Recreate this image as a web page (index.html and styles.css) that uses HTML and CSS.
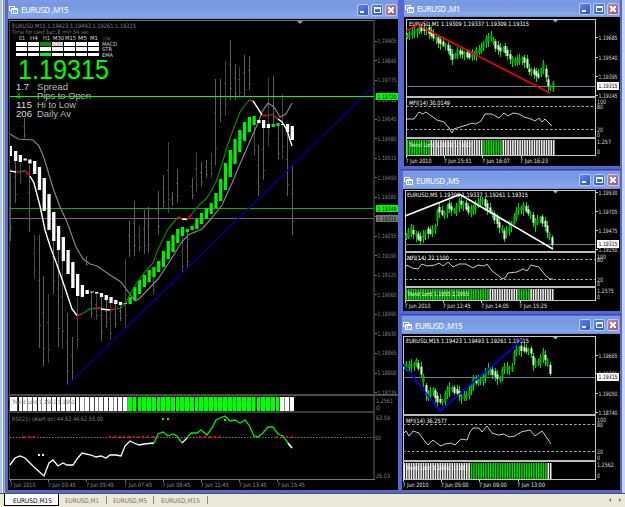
FILE: index.html
```html
<!DOCTYPE html>
<html lang="en">

<head>
    <title>EURUSD charts</title>
    <meta charset="UTF-8">
    <link rel="stylesheet" href="styles.css">
</head>

<body>
    <svg class="defs">
        <symbol id="chart-icon" viewBox="0 0 9 9">
            <path d="M0.5 1.5h5v4h-5z" fill="#5f8fe0" stroke="#fff"/>
            <path d="M2.5 3.5h6v5h-6z" fill="#7aa5ee" stroke="#fff"/>
            <path d="M3 4.5h5M4.5 7.5v-2M6.5 7.5v-1" stroke="#fff"/>
        </symbol>
    </svg>

    <div class="workspace">
        <div class="window main">
            <div class="titlebar">
                <svg class="icon"><use href="#chart-icon"/></svg>
                <span class="title">EURUSD ,M15</span>
                <span class="btn min"></span><span class="btn max"></span><span class="btn close"></span>
            </div>
            <svg class="chart" id="main" viewBox="8 19 390 471"></svg>
        </div>

        <div class="side">
            <div class="window m1">
                <div class="titlebar">
                    <svg class="icon"><use href="#chart-icon"/></svg>
                    <span class="title">EURUSD ,M1</span>
                    <span class="btn min"></span><span class="btn max"></span><span class="btn close"></span>
                </div>
                <svg class="chart" id="m1" viewBox="404 17 216 149"></svg>
            </div>
            <div class="window m5">
                <div class="titlebar">
                    <svg class="icon"><use href="#chart-icon"/></svg>
                    <span class="title">EURUSD ,M5</span>
                    <span class="btn min"></span><span class="btn max"></span><span class="btn close"></span>
                </div>
                <svg class="chart" id="m5" viewBox="403 189 217 122"></svg>
            </div>
            <div class="window m15">
                <div class="titlebar">
                    <svg class="icon"><use href="#chart-icon"/></svg>
                    <span class="title">EURUSD ,M15</span>
                    <span class="btn min"></span><span class="btn max"></span><span class="btn close"></span>
                </div>
                <svg class="chart" id="m15" viewBox="402 334 218 156"></svg>
            </div>
        </div>
    </div>

    <div class="tabs">
        <svg class="tab active" width="55" height="12"><text x="8" y="8.5" textLength="39" lengthAdjust="spacingAndGlyphs">EURUSD,M15</text></svg>
        <svg class="tab" width="48" height="12"><text x="6" y="8.5" textLength="34" lengthAdjust="spacingAndGlyphs">EURUSD,M1</text></svg>
        <svg class="tab" width="47" height="12"><text x="6" y="8.5" textLength="34" lengthAdjust="spacingAndGlyphs">EURUSD,M5</text></svg>
        <svg class="tab" width="54" height="12"><text x="7" y="8.5" textLength="39" lengthAdjust="spacingAndGlyphs">EURUSD,M15</text></svg>
        <svg class="scroll" width="18" height="12"><path d="M4 4v4l-2-2zM12 4v4l2-2z"/></svg>
    </div>

    <script src="charts.js"></script>
</body>

</html>
```
FILE: styles.css
```css
body {
    margin: 0;
    width: 625px;
    height: 507px;
    overflow: hidden;
    display: flex;
    flex-direction: column;
    background: #ece9d8;
    font-family: "Liberation Sans", sans-serif;
}

.defs {
    display: none;
}

.workspace {
    display: flex;
    height: 493px;
    box-sizing: border-box;
    border-left: 2px solid #a9c3f0;
    background: linear-gradient(90deg, #fff 0 1px, #6f87d8 1px 2px, #b5b2a6 2px 3px, #4d5fcb 3px 100%);
    padding-left: 3px;
}

.window {
    box-sizing: border-box;
    display: flex;
    flex-direction: column;
    background: #5468cf;
}

.main {
    width: 395px;
    height: 493px;
    padding: 0 2px 3px 3px;
}

.side {
    width: 225px;
    box-sizing: border-box;
    border-right: 3px solid #c8d4f0;
}

.m1 {
    height: 169px;
    padding: 0 2px 3px 4px;
}

.m5 {
    height: 145px;
    padding: 1px 2px 3px 3px;
    border-top: 1px solid #3746a8;
}

.m15 {
    height: 179px;
    padding: 1px 2px 3px 2px;
    border-top: 1px solid #3746a8;
}

.titlebar {
    display: flex;
    align-items: center;
    height: 19px;
    flex: none;
    gap: 2px;
    padding-right: 1px;
    background: linear-gradient(#7a9be6, #7897df 25%, #7d9fe6 60%, #86a8ec 85%, #7590d6);
}

.m1 .titlebar {
    height: 17px;
}

.m5 .titlebar,
.m15 .titlebar {
    height: 18px;
}

.icon {
    width: 9px;
    height: 9px;
    margin-right: 1px;
    margin-left: 1px;
}

.title {
    flex: 1;
    font: 600 8px "Open Sans", sans-serif;
    letter-spacing: -0.5px;
    color: #e6eefe;
}

.btn {
    box-sizing: border-box;
    position: relative;
    width: 12px;
    height: 12px;
    border: 1px solid #b9cbf5;
    border-radius: 2px;
    background: linear-gradient(135deg, #5d87ec, #2c55cf);
}

.btn::after {
    content: "";
    position: absolute;
    box-sizing: border-box;
}

.min::after {
    left: 2px;
    bottom: 2px;
    width: 4px;
    height: 2px;
    background: #fff;
}

.max::after {
    left: 2px;
    top: 2px;
    width: 7px;
    height: 6px;
    border: 1px solid #fff;
    border-top-width: 2px;
}

.close {
    background: linear-gradient(135deg, #c48a9d, #a2566f);
}

.close::after {
    inset: 2px;
    background:
        linear-gradient(45deg, transparent 40%, #fff 40% 60%, transparent 60%),
        linear-gradient(-45deg, transparent 40%, #fff 40% 60%, transparent 60%);
}

.chart {
    display: block;
    flex: 1;
    min-height: 0;
    width: 100%;
    background: #000;
}

.small {
    font-family: "DejaVu Sans Condensed", "DejaVu Sans", sans-serif;
}

.tabs {
    display: flex;
    height: 14px;
    box-sizing: border-box;
    border-top: 1px solid #55534c;
    padding-left: 4px;
    background: #ece9d8;
}

.tab {
    box-sizing: border-box;
    font: 6.5px "DejaVu Sans Condensed", "DejaVu Sans", sans-serif;
    fill: #77746a;
    background: linear-gradient(#8f8c7d, #8f8c7d) right 2px / 1px 8px no-repeat;
}

.tab.active {
    background: #fff;
    border: 1px solid #000;
    border-top: 0;
    fill: #000;
}

.scroll {
    margin-left: auto;
    fill: #77746a;
}
```
FILE: charts.js
```javascript
var NS = "http://www.w3.org/2000/svg";
var root;

function el(name, attrs) {
    var e = document.createElementNS(NS, name);
    for (var k in attrs) e.setAttribute(k, attrs[k]);
    root.appendChild(e);
    return e;
}

function rect(x, y, w, h, fill) {
    el("rect", { x: x, y: y, width: w, height: h, fill: fill, "shape-rendering": "crispEdges" });
}

function line(points, color, width, dash) {
    var a = { points: points, fill: "none", stroke: color, "stroke-width": width || 1 };
    if (dash) a["stroke-dasharray"] = dash;
    el("polyline", a);
}

function text(x, y, w, str, color, size) {
    var a = { x: x, y: y, fill: color, "font-size": size || 6, textLength: w, lengthAdjust: "spacingAndGlyphs" };
    if (!size || size < 8) a["class"] = "small";
    el("text", a).textContent = str;
}

function drawMain() {
    var i, grey = "#666";
    root = document.getElementById("main");

    // frame and separators
    rect(9, 20, 1, 460, "#444");
    rect(9, 20, 365, 1, "#777");
    rect(373, 20, 2, 460, "#333");
    rect(9, 394, 389, 2, "#4a4a4a");
    rect(9, 411, 366, 2, "#3c3c3c");
    rect(9, 479, 366, 1, "#777");
    el("path", { d: "M297 21h6l-3 3z", fill: "#999" });

    // high/low sticks
    var sticks = [[10, 173, 241], [15, 160, 203], [20, 162, 184], [24, 118, 138], [29, 165, 232], [34, 235, 279], [39, 235, 348],
        [43, 276, 366], [48, 294, 363], [53, 230, 294], [58, 250, 347], [62, 260, 349], [67, 313, 385], [72, 337, 381],
        [77, 297, 349], [86, 256, 266], [91, 292, 318], [96, 293, 320], [101, 297, 341], [106, 300, 328], [110, 303, 340],
        [115, 304, 328], [120, 305, 321], [125, 259, 329], [129, 221, 257], [134, 201, 256], [139, 226, 252], [144, 210, 254],
        [148, 207, 253], [153, 272, 295], [158, 191, 235], [163, 175, 207], [168, 142, 213], [172, 192, 206], [177, 169, 203],
        [182, 236, 273], [187, 232, 268], [192, 178, 199], [196, 152, 192], [201, 162, 187], [206, 160, 178], [211, 153, 178],
        [215, 79, 165], [220, 79, 122], [225, 61, 116], [230, 40, 100], [235, 64, 100], [239, 67, 98], [244, 55, 97],
        [249, 56, 90], [254, 124, 156], [258, 145, 196], [263, 128, 180], [268, 78, 146], [273, 76, 126], [278, 124, 160],
        [282, 94, 159], [287, 134, 196], [292, 165, 235]];
    sticks.forEach(function (s, n) {
        rect(s[0], s[1], 1, s[2] - s[1], n % 3 == 2 ? "#444" : "#5c5c5c");
        rect(s[0] - 1, s[1] + (s[2] - s[1]) * 0.4, 1, 1, "#444");
        rect(s[0] + 1, s[1] + (s[2] - s[1]) * 0.8, 1, 1, "#444");
    });

    // levels
    rect(10, 218, 364, 1, grey);
    rect(10, 208, 364, 1, "#00b400");

    // envelope
    line("10,134 18,139 33,140 39,146 44,158 53,188 60,207 67,222 76,247 83,259 90,264 97,266 110,275 121,282 129,293 135,301 139,299 158,279 170,261 181,243 188,235 202,229 210,220 222,205 232,183 240,164 250,141 258,123 262,112 268,103 274,107 280,117 286,114 292,103", "#858585", 1.2);

    // smoothed bars
    var bars = [[146, 156], [151, 161], [155, 162], [158.5, 160.5], [159.5, 163.5], [161, 174], [167, 190], [178, 211], [194, 230], [212, 241],
        [226, 250], [237, 261], [250, 274], [262, 288], [274, 296], [285, 297], [290, 294], [291.5, 292.5], [292, 293.5], [293, 297],
        [295, 300], [297, 303], [300, 304], [302, 305], [303, 304], [297, 304], [287, 300], [280, 294], [275, 287], [270, 282],
        [267, 277], [261, 272], [251, 267], [241, 259], [235, 252], [229, 243], [227, 236], [229, 232], [226, 230], [219, 229],
        [213, 224], [208, 219], [203, 214], [193, 208], [179, 201], [163, 190], [150, 177], [139, 164], [130, 152], [122, 141],
        [117, 132], [116, 125], [120, 123], [120, 128], [124, 128], [124, 127], [123, 126], [124, 125], [124, 132], [126, 140]];
    for (i = 0; i < bars.length; i++) {
        var green = i >= 25 && i < 52 || i == 55 || i == 56;
        el("rect", { x: i ? 9.2 + 4.77 * i : 10, y: bars[i][0], width: i ? 3.3 : 2, height: bars[i][1] - bars[i][0], fill: green ? "#00f000" : "#fff" });
    }

    // signal line, coloured by direction
    var G = "#008c00", R = "#f00", W = "#fff";
    line("10,171 16,172", W, 1.4);
    line("16,172 20,172", R, 1.4);
    line("20,172 25,170.5", G, 1.4);
    line("25,170.5 30,176", R, 1.4);
    line("30,176 34,183 40,206 45,230 50,246 56,262 64,285 72,309 77,315.5", W, 1.4);
    line("77,315.5 82,314", R, 1.4);
    line("82,314 90,309 97,308", G, 1.4);
    line("97,308 101,308", R, 1.6);
    line("101,309 110,310", W, 1.4);
    line("110,310 115,309", R, 1.6);
    line("115,309 121,308 125,304 134,287 144,273 153,263 157,252 161,243 168,229 178,217", G, 1.2);
    line("178,217 182,219", R, 1.6);
    line("182,219 187,219.5", W, 1.4);
    line("187,219.5 192,214", R, 1.6);
    line("192,214 200,204 206,199 210,193 216,182 222,164 227,147 233,130 240,112 249,100", G, 1.2);
    line("249,100 253,101", R, 1.6);
    line("253,101 257,107 262,115", W, 1.4);
    line("262,115.5 268,115.5", R, 1.6);
    line("268,115 273,114.5", G, 1.2);
    line("273,115 278,119", R, 1.6);
    line("278,119 282,122 287,130 292,146", W, 1.4);

    line("67.5,385 374,86", "#0000a8", 1.2);

    // header
    text(12, 28, 124, "EURUSD,M15  1.19423 1.19493 1.19261 1.19315", "#808080");
    text(12, 34, 77, "Time for next bar: 8 min 54 sec", "#777");
    [["D1", 19, 6], ["H4", 30, 8], ["H1", 43, 7], ["M30", 53, 11], ["M15", 65, 11], ["M5", 78, 9], ["M1", 90, 8]].forEach(function (h) {
        text(h[1], 40, h[2], h[0], "#ddd", 5.5);
    });
    text(102, 40, 8, "◇|a", "#777", 5.5);
    ["MACD", "STR", "EMA"].forEach(function (name, r) {
        for (i = 0; i < 7; i++) {
            var c = "#fff";
            if (i == 2 && r == 0) c = "#009600";
            if (i == 3 && r == 0) c = "#d3d3d3";
            if (i == 2 && r == 2) c = "#0f0";
            rect(16 + 12 * i, [42, 47, 53][r], 11, r == 2 ? 3 : 4, c);
        }
        text(102, [45.5, 51, 56.5][r], [15, 10, 11][r], name, "#ddd", 5);
    });
    text(18, 79, 91, "1.19315", "#0f0", 27);
    [["1.7", 13, "Spread", 31], ["4", 5, "Pips to Open", 54], ["115", 16, "Hi to Low", 39], ["206", 16, "Daily Av", 34]].forEach(function (r, n) {
        text(16, 90 + 9 * n, r[1], r[0], n == 1 ? "#00c000" : "#ddd", 9.5);
        text(37, 90 + 9 * n, r[3], r[2], "#bbb", 9.5);
    });
    rect(10, 96, 364, 1, "#0f0");

    // price scale
    for (i = 0; i < 19; i++) {
        var y = 40.5 + 19.53 * i;
        rect(375, Math.round(y), 2, 1, "#777");
        text(377.5, y + 2.5, 19, (1.19905 - 0.00065 * i).toFixed(5), "#808080");
    }
    rect(376, 93, 22, 7, "#0f0");
    text(377.5, 98.8, 19, "1.19720", "#000");
    rect(376, 205, 22, 7, "#0f0");
    text(377.5, 210.8, 19, "1.19349", "#000");
    rect(376, 215, 22, 7, "#777");
    text(377.5, 220.8, 19, "1.19315", "#000");

    // trend strip
    for (i = 0; i < 60; i++) {
        var on = i >= 25 && i < 57;
        var x = Math.max(10, 9 + 4.76 * i);
        rect(x, 397, 4.6, 14, on ? "#009000" : i % 3 ? "#444" : "#888");
        rect(x, 397, 3.7, 14, on ? "#0f0" : "#fff");
    }
    text(12, 404, 63, "Trend Lord 1.1961 1.1951", "#777");
    text(376, 402.5, 17, "1.2561", "#808080");
    text(376, 410, 4, "0", "#808080");

    // RSI
    line("10,437.5 374,437.5", "#777", 1, "1.5 1.5");
    line("10,465 15,458 20,456 25,458 30,463 34,467 44,476 49,463 53,460 58,466 63,463 67,465 73,465 77,459 82,453 91,455 96,457 101,456 106,458 110,455 116,455 121,456 125,446 130,441 134,443 139,445 144,444 154,443", "#fff", 1.3);
    line("154,443 158,434 163,432 168,436 173,434 177,436 182,443", "#0e0", 1.3);
    line("182,443 187,438", "#fff", 1.3);
    line("187,438 191,433 197,433 201,430 207,435 212,428 216,420 225,416 230,421 235,420 240,423 245,420 249,425 254,436 258,437 263,433 268,427 273,427 278,434 283,436 288,443", "#0e0", 1.3);
    line("288,443 292,448", "#fff", 1.6);
    [24, 29, 34, 110, 115, 120, 124, 129, 134, 139, 143, 148, 153, 158, 200, 205, 210, 215, 220, 277, 282, 287, 292].forEach(function (x) {
        rect(x - 1, 436, 2, 2, "#f00");
    });
    rect(38, 454, 2, 2, "#fff");
    rect(42, 454, 2, 2, "#fff");
    rect(162, 418, 2, 2, "#0f0");
    rect(167, 418, 2, 2, "#0f0");
    rect(224, 419, 2, 2, "#0f0");
    text(12, 421, 91, "RSI(21) (Alert on) 44.62 44.62 50.00", "#808080");
    text(376, 419.5, 14, "63.59", "#808080");
    text(375, 440, 6, "50", "#808080");
    text(376, 477.5, 14, "26.03", "#808080");

    ["2010", "03:45", "05:45", "07:45", "09:45", "11:45", "13:45", "15:45"].forEach(function (t, n) {
        rect(10 + Math.round(38.2 * n), 480, 1, 2, "#777");
        text(9.5 + 38.2 * n, 487, n ? 28 : 26, "7 Jun " + t, "#909090");
    });
}

// o: geometry and data of one of the small charts
function drawSmall(o) {
    var i, frame = "#c8c8c8";
    root = document.getElementById(o.id);
    var L = o.left, w = 595 - L;

    rect(L, o.top, w, 1, frame);
    rect(L, o.top, 1, o.bottom - o.top, frame);
    rect(595, o.top, 1, o.bottom - o.top, frame);
    rect(L, o.sep[0], w + 1, 2, "#bbb");
    rect(L, o.sep[1], w + 1, 2, "#bbb");
    rect(L, o.bottom, w + 1, 1, frame);
    el("path", { d: "M553 " + (o.top + 1) + "h5l-2.5 2.5z", fill: "#9fb0c4" });

    rect(L, o.price, w, 1, "#708090");

    // candles, spread around the price path
    var k = 0, p = o.path;
    for (i = 0; i < 62; i++) {
        var x = L + 1 + i * 2.39;
        while (k < p.length - 2 && p[k + 1][0] < x) k++;
        var f = (x - p[k][0]) / (p[k + 1][0] - p[k][0]);
        var slope = (p[k + 1][1] - p[k][1]) / (p[k + 1][0] - p[k][0]);
        var mid = p[k][1] + f * (p[k + 1][1] - p[k][1]);
        var body = 2 + Math.min(5, Math.abs(slope) * 1.4) + (i * 7 % 4);
        var up = 1.5 + i * 5 % 4, down = 1.5 + i * 11 % 5;
        rect(Math.round(x), mid - body / 2 - up, 1, body + up + down, "#00e000");
        el("rect", { x: Math.round(x) - 0.6, y: mid - body / 2, width: 2.1, height: body, fill: slope > 0.1 && i % 4 ? "#d0ffd0" : "#00b400" });
    }

    text(o.tx, o.top + 7, o.tw, o.title, "#fff");
    line(o.zigzag, o.color, 1.6);

    // price scale
    o.labels.forEach(function (l) {
        rect(596, l[0], 2, 1, frame);
        text(598.5, l[0] + 2.5, 19, l[1], "#ddd");
    });
    rect(597, o.price - 4, 22, 8, "#fff");
    text(598.5, o.price + 2.3, 19, "1.19315", "#000");

    // MFI
    line(L + "," + (o.dash[0] + 0.5) + " 595," + (o.dash[0] + 0.5), "#aaa", 1, "2.5 2");
    line(L + "," + (o.dash[1] + 0.5) + " 595," + (o.dash[1] + 0.5), "#aaa", 1, "2.5 2");
    line(o.mfi, "#ccc", 1);
    text(o.tx, o.sep[0] + 9, o.mw, o.mtext, "#fff");
    text(597, o.sep[0] + 7.5, 9, "100", "#ddd");
    text(597, o.dash[0] + 3, 6, "80", "#ddd");
    text(597, o.dash[1] + 2.5, 6, "20", "#ddd");
    text(597, o.sep[1] - 0.5, 3, "0", "#ddd");

    // trend strip
    var ty = o.sep[1] + 3, th = o.bottom - ty;
    for (i = 0; i < 62; i++) {
        x = L + 0.5 + i * 2.4;
        var green = o.green.some(function (g) { return x >= g[0] && x < g[1]; });
        el("rect", { x: x, y: ty, width: 1.6, height: th, fill: green ? "#00e000" : "#eee" });
    }
    text(o.tx, ty + 7, 62, o.trend, "#fff");
    text(597, o.sep[1] + 7, o.max.length * 2.8, o.max, "#ddd");
    text(597, o.bottom - 1.5, 3, "0", "#ddd");

    o.times.forEach(function (t, n) {
        rect(L + Math.round(38.2 * n), o.bottom, 1, 3, frame);
        text(L - 0.5 + 38.2 * n, o.bottom + 8, n ? 28 : 26, "7 Jun " + t, "#e4e4e4");
    });
}

drawMain();

drawSmall({
    id: "m1", left: 406, top: 19, sep: [96, 137], bottom: 155, price: 86, tx: 409, tw: 120,
    title: "EURUSD,M1  1.19309 1.19337 1.19309 1.19315",
    path: [[406, 37], [412, 33], [420, 29], [428, 30], [436, 39], [441, 42], [448, 48], [453, 58], [458, 52], [463, 53], [470, 56], [477, 52],
        [482, 49], [485, 41], [491, 37], [496, 46], [501, 50], [504, 48], [510, 57], [514, 62], [522, 59], [526, 61], [528, 70], [534, 72],
        [539, 76], [544, 65], [547, 80], [550, 88], [553, 86]],
    zigzag: "406,31 418,25 550,93", color: "#f00",
    labels: [[37, "1.19685"], [57, "1.19540"], [76, "1.19395"], [95, "1.19245"]],
    dash: [106, 129], mw: 41, mtext: "MFI(14) 30.0149",
    mfi: "406,119 414,119 419,112 423,114 426,112 430,115 437,120 444,122 449,128 452,133 454,129 460,127 467,125 472,123 476,124 481,121 485,114 492,114 499,118 504,113 508,116 513,113 519,114 524,117 531,119 535,121 539,118 542,122 545,119 550,124 552,126",
    green: [[400, 430], [482, 501]], trend: "Trend Lord 1.1932 1.1932", max: "1.257",
    times: ["2010", "15:51", "16:07", "16:23"]
});

drawSmall({
    id: "m5", left: 405, top: 190, sep: [251, 286], bottom: 300, price: 244, tx: 407, tw: 121,
    title: "EURUSD,M5  1.19309 1.19337 1.19261 1.19315",
    path: [[405, 238], [411, 230], [416, 235], [421, 239], [427, 231], [432, 232], [436, 226], [438, 208], [444, 215], [449, 206], [455, 212],
        [460, 202], [465, 205], [470, 212], [475, 206], [483, 200], [489, 209], [496, 219], [502, 230], [504, 235], [508, 230], [513, 221],
        [518, 210], [524, 207], [531, 215], [535, 224], [541, 218], [546, 226], [549, 235], [553, 244]],
    zigzag: "405,216 460,194.5 553,249", color: "#fff",
    labels: [[192, "1.19930"], [211, "1.19705"], [230, "1.19475"], [249, "1.19250"]],
    dash: [259, 279], mw: 42, mtext: "MFI(14) 32.1100",
    mfi: "405,268 407,265 412,268 418,269 422,264 427,266 435,265 439,263 443,266 448,262 453,267 459,264 466,264 473,268 478,265 484,266 487,264 492,271 499,276 502,279 505,278 508,273 517,272 523,269 527,271 531,265 539,267 545,275 550,279 553,279",
    green: [[400, 488], [517, 529]], trend: "Trend Lord 1.1955 1.1955", max: "1.2575",
    times: ["2010", "12:45", "14:05", "15:25"]
});

drawSmall({
    id: "m15", left: 403, top: 336, sep: [414, 460], bottom: 479, price: 377, tx: 406, tw: 123,
    title: "EURUSD,M15  1.19423 1.19493 1.19261 1.19315",
    path: [[403, 366], [411, 366], [416, 363], [420, 368], [424, 382], [427, 398], [433, 390], [438, 400], [443, 402], [447, 392], [450, 388],
        [458, 392], [461, 397], [467, 396], [470, 390], [474, 380], [478, 382], [483, 378], [488, 370], [494, 373], [500, 380], [504, 368],
        [512, 368], [515, 352], [520, 348], [526, 350], [531, 351], [534, 365], [540, 361], [543, 354], [547, 361], [550, 370], [553, 378]],
    zigzag: "403,364 440,411 522,340", color: "#00f",
    labels: [[355, "1.19665"], [373, "1.19355"], [393, "1.19050"], [412, "1.18740"]],
    dash: [424, 451], mw: 41, mtext: "MFI(14) 36.2577",
    mfi: "403,434 406,431 409,436 413,431 419,433 423,439 428,445 433,440 438,444 441,446 445,444 451,443 455,445 458,442 461,439 467,440 470,432 473,428 479,428 482,432 487,426 492,433 498,435 504,434 509,437 515,436 521,432 530,430 535,436 542,431 547,438 551,444",
    green: [[469, 546]], trend: "Trend Lord 1.1961 1.1951", max: "1.2562",
    times: ["2010", "05:00", "09:00", "13:00"]
});
```
